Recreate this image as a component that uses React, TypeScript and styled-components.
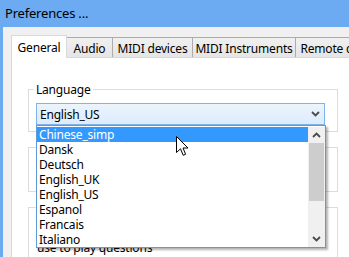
import styled, { createGlobalStyle } from "styled-components";

const GlobalStyle = createGlobalStyle`
  html, body {
    margin: 0;
    padding: 0;
    background: #f0f0f0;
  }
  * {
    box-sizing: border-box;
  }
`;

const languages = [
  "Chinese_simp",
  "Dansk",
  "Deutsch",
  "English_UK",
  "English_US",
  "Espanol",
  "Francais",
  "Italiano",
];

const tabs = [
  { label: "General", w: 56 },
  { label: "Audio", w: 47 },
  { label: "MIDI devices", w: 81 },
  { label: "MIDI Instruments", w: 104 },
  { label: "Remote control", w: 95 },
];

const Chevron = ({ up }: { up?: boolean }) => (
  <svg width="9" height="6" viewBox="0 0 9 6">
    <path
      d={up ? "M1 5 L4.5 1.5 L8 5" : "M1 1 L4.5 4.5 L8 1"}
      fill="none"
      stroke="#4a4a4a"
      strokeWidth="1.8"
    />
  </svg>
);

const Cursor = () => (
  <svg width="13" height="21" viewBox="0 0 13 21">
    <path
      d="M0.5 0.5 L0.5 16.5 L4.5 12.8 L7.2 19.3 L9.6 18.3 L7 12 L12 12 Z"
      fill="#fff"
      stroke="#000"
      strokeWidth="1"
      strokeLinejoin="miter"
    />
  </svg>
);

const App = () => {
  return (
    <Window>
      <GlobalStyle />
      <TitleBar>Preferences ...</TitleBar>
      <Frame>
        <Edge />
        <Client>
          <TabStrip>
            {tabs.map((t, i) => (
              <Tab key={t.label} $active={i === 0} $w={t.w}>
                {t.label}
              </Tab>
            ))}
          </TabStrip>
          <Panel>
            <GroupBox>
              <Legend>Language</Legend>
              <Combo>
                <ComboValue>English_US</ComboValue>
                <Chevron />
                <Dropdown>
                  <List>
                    {languages.map((l, i) => (
                      <Item key={l} $selected={i === 0}>
                        {l}
                      </Item>
                    ))}
                  </List>
                  <Scrollbar>
                    <ArrowButton>
                      <Chevron up />
                    </ArrowButton>
                    <Track>
                      <Thumb />
                    </Track>
                    <ArrowButton>
                      <Chevron />
                    </ArrowButton>
                  </Scrollbar>
                </Dropdown>
              </Combo>
            </GroupBox>
            <Box $h={45} />
            <Box $h={60}>
              <Note>use to play questions</Note>
            </Box>
          </Panel>
        </Client>
      </Frame>
      <Pointer>
        <Cursor />
      </Pointer>
    </Window>
  );
};

export default App;

const Window = styled.div`
  position: relative;
  width: 349px;
  height: 257px;
  overflow: hidden;
  display: flex;
  flex-direction: column;
  background: #f0f0f0;
  font-family: "Noto Sans", "Open Sans", sans-serif;
  font-size: 12px;
  letter-spacing: -0.2px;
  color: #000;
`;

const TitleBar = styled.div`
  height: 27px;
  flex-shrink: 0;
  background: #6cabf2;
  display: flex;
  align-items: center;
  padding: 0 0 1px 5px;
  font-size: 13px;
  letter-spacing: -0.2px;
  color: #000;
`;

const Frame = styled.div`
  flex: 1;
  display: flex;
  min-width: 0;
`;

const Edge = styled.div`
  width: 3px;
  flex-shrink: 0;
  background: #6cabf2;
`;

const Client = styled.div`
  flex: 1;
  min-width: 0;
  display: flex;
  flex-direction: column;
  padding: 8px 0 0 8px;
`;

const TabStrip = styled.div`
  height: 22px;
  display: flex;
  align-items: flex-end;
  white-space: nowrap;
`;

const Tab = styled.div<{ $active?: boolean; $w: number }>`
  position: relative;
  flex-shrink: 0;
  width: ${(p) => p.$w}px;
  display: flex;
  justify-content: center;
  align-items: center;
  border: 1px solid ${(p) => (p.$active ? "#d9d9d9" : "#acacac")};
  border-bottom: none;
  height: ${(p) => (p.$active ? 23 : 20)}px;
  margin-bottom: ${(p) => (p.$active ? -1 : 0)}px;
  margin-left: ${(p) => (p.$active ? 0 : -1)}px;
  z-index: ${(p) => (p.$active ? 2 : 1)};
  background: ${(p) =>
    p.$active ? "#fff" : "linear-gradient(#f0f0f0, #e5e5e5)"};
  padding-top: ${(p) => (p.$active ? 0 : 1)}px;
`;

const Panel = styled.div`
  flex: 1;
  background: #fff;
  border: 1px solid #d9d9d9;
  border-right: none;
  border-bottom: none;
  padding: 24px 0 0 16px;
  display: flex;
  flex-direction: column;
`;

const GroupBox = styled.fieldset`
  margin: 0;
  width: 310px;
  border: 1px solid #dcdcdc;
  padding: 0 12px 6px 7px;
`;

const Legend = styled.legend`
  padding: 0 2px;
  margin-left: -2px;
  line-height: 15px;
`;

const Combo = styled.div`
  position: relative;
  margin-top: 6px;
  height: 22px;
  display: flex;
  align-items: center;
  justify-content: space-between;
  padding: 0 4px 0 3px;
  border: 1px solid #7eb4ea;
  background: linear-gradient(#ecf4fc, #dcecfc);
`;

const ComboValue = styled.span``;

const Dropdown = styled.div`
  position: absolute;
  top: 21px;
  left: -1px;
  width: 290px;
  height: 123px;
  z-index: 5;
  display: flex;
  padding-top: 1px;
  background: #fff;
  border: 1px solid #5b9bd8;
  box-shadow: 2px 2px 2px rgba(0, 0, 0, 0.3);
`;

const List = styled.div`
  flex: 1;
`;

const Item = styled.div<{ $selected?: boolean }>`
  height: 15px;
  line-height: 15px;
  padding-left: 2px;
  background: ${(p) => (p.$selected ? "#3399ff" : "transparent")};
  color: ${(p) => (p.$selected ? "#fff" : "#000")};
`;

const Scrollbar = styled.div`
  width: 17px;
  display: flex;
  flex-direction: column;
  background: #f0f0f0;
`;

const ArrowButton = styled.div`
  height: 16px;
  display: flex;
  align-items: center;
  justify-content: center;
`;

const Track = styled.div`
  flex: 1;
`;

const Thumb = styled.div`
  height: 58px;
  margin: 0 1px;
  background: #cdcdcd;
`;

const Box = styled.div<{ $h: number }>`
  width: 310px;
  height: ${(p) => p.$h}px;
  margin-top: 15px;
  border: 1px solid #dcdcdc;
  flex-shrink: 0;
  padding: 32px 0 0 8px;
`;

const Note = styled.div`
  line-height: 15px;
  white-space: nowrap;
`;

const Pointer = styled.div`
  position: absolute;
  left: 176px;
  top: 136px;
  z-index: 10;
  line-height: 0;
`;
